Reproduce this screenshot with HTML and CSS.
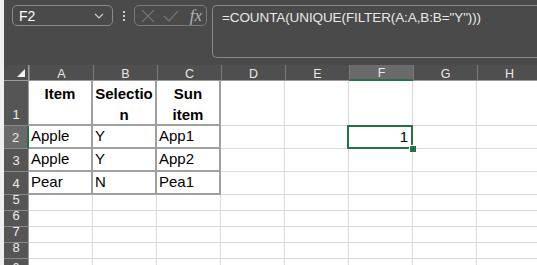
FILE: index.html
```html
<!DOCTYPE html>
<html>
<head>
<meta charset="utf-8">
<link rel="stylesheet" href="styles.css">
</head>
<body>
<div class="app">
  <div class="toolbar">
    <div class="namebox">
      <span class="name">F2</span>
      <svg class="chev" width="10" height="6" viewBox="0 0 10 6"><path d="M1 1 L5 5 L9 1" fill="none" stroke="#d0d0d0" stroke-width="1.2"/></svg>
    </div>
    <div class="dots"><span></span><span></span><span></span></div>
    <div class="fxbox">
      <svg width="14" height="14" viewBox="0 0 14 14"><path d="M1 1 L13 13 M13 1 L1 13" stroke="#7a7a7a" stroke-width="1.1" fill="none"/></svg>
      <svg width="16" height="12" viewBox="0 0 16 12"><path d="M1 6 L6 11 L15 1" stroke="#7a7a7a" stroke-width="1.1" fill="none"/></svg>
      <span class="fx">fx</span>
    </div>
    <div class="formula">=COUNTA(UNIQUE(FILTER(A:A,B:B="Y")))</div>
  </div>
  <div class="grid">
    <div class="corner"><span class="tri"></span></div>
    <div class="ch">A</div><div class="ch">B</div><div class="ch">C</div><div class="ch">D</div>
    <div class="ch">E</div><div class="ch ch-sel">F</div><div class="ch">G</div><div class="ch">H</div>

    <div class="rh">1</div>
    <div class="c t hd">Item</div><div class="c t hd">Selection</div><div class="c t hd">Sun item</div>
    <div class="c"></div><div class="c"></div><div class="c"></div><div class="c"></div><div class="c"></div>

    <div class="rh rh-sel">2</div>
    <div class="c t">Apple</div><div class="c t">Y</div><div class="c t">App1</div>
    <div class="c"></div><div class="c"></div><div class="c num sel">1</div><div class="c"></div><div class="c"></div>

    <div class="rh">3</div>
    <div class="c t">Apple</div><div class="c t">Y</div><div class="c t">App2</div>
    <div class="c"></div><div class="c"></div><div class="c"></div><div class="c"></div><div class="c"></div>

    <div class="rh">4</div>
    <div class="c t">Pear</div><div class="c t">N</div><div class="c t">Pea1</div>
    <div class="c"></div><div class="c"></div><div class="c"></div><div class="c"></div><div class="c"></div>

    <div class="rh">5</div>
    <div class="c"></div><div class="c"></div><div class="c"></div><div class="c"></div><div class="c"></div><div class="c"></div><div class="c"></div><div class="c"></div>
    <div class="rh">6</div>
    <div class="c"></div><div class="c"></div><div class="c"></div><div class="c"></div><div class="c"></div><div class="c"></div><div class="c"></div><div class="c"></div>
    <div class="rh">7</div>
    <div class="c"></div><div class="c"></div><div class="c"></div><div class="c"></div><div class="c"></div><div class="c"></div><div class="c"></div><div class="c"></div>
    <div class="rh">8</div>
    <div class="c"></div><div class="c"></div><div class="c"></div><div class="c"></div><div class="c"></div><div class="c"></div><div class="c"></div><div class="c"></div>
    <div class="rh rh-last">9</div>
    <div class="c"></div><div class="c"></div><div class="c"></div><div class="c"></div><div class="c"></div><div class="c"></div><div class="c"></div><div class="c"></div>
  </div>
</div>
</body>
</html>
```
FILE: styles.css
```css
* { box-sizing: border-box; }
html, body { margin: 0; padding: 0; }
body {
  width: 537px;
  height: 265px;
  overflow: hidden;
  background: #f0f0f0;
  font-family: "Liberation Sans", Arial, sans-serif;
}
.app {
  margin-left: 4px;
  height: 265px;
  background: #ffffff;
  overflow: hidden;
}
.toolbar {
  height: 65px;
  background: #4a4a4a;
  display: flex;
  align-items: flex-start;
  padding: 5px 0 0 8px;
}
.namebox {
  width: 101px;
  height: 21px;
  border: 1px solid #8a8a8a;
  border-radius: 5px;
  display: flex;
  align-items: center;
  justify-content: space-between;
  padding: 0 8px 0 6px;
  color: #ffffff;
  font-size: 14px;
}
.chev { margin-top: 1px; }
.dots {
  width: 21px;
  height: 21px;
  display: flex;
  flex-direction: column;
  align-items: center;
  justify-content: center;
  gap: 2px;
}
.dots span {
  width: 2px;
  height: 2px;
  background: #cfcfcf;
}
.fxbox {
  width: 73px;
  height: 21px;
  border: 1px solid #7a7a7a;
  border-radius: 5px;
  display: flex;
  align-items: center;
  gap: 8px;
  padding: 0 4px 0 6px;
}
.fx {
  font-family: "Liberation Serif", "DejaVu Serif", serif;
  font-style: italic;
  font-size: 17px;
  color: #b4b4b4;
  margin-left: 3px;
}
.formula {
  margin-left: 5px;
  flex: 1;
  height: 53px;
  border: 1px solid #8a8a8a;
  border-right: none;
  border-radius: 5px 0 0 5px;
  color: #e8e8e8;
  font-size: 13.5px;
  padding: 4px 0 0 9px;
  letter-spacing: -0.1px;
}
.grid {
  display: grid;
  grid-template-columns: 25px repeat(8, 64px);
  grid-template-rows: 16px 45px 23px 23px 23px 16px 16px 16px 16px 16px;
}
.corner {
  background: #4f4f4f;
  border-right: 1px solid #9a9a9a;
  border-bottom: 1px solid #9a9a9a;
  position: relative;
}
.tri {
  position: absolute;
  right: 3px;
  bottom: 3px;
  width: 0;
  height: 0;
  border-left: 8px solid transparent;
  border-bottom: 8px solid #f2f2f2;
}
.ch {
  background: #4f4f4f;
  color: #e8e8e8;
  font-size: 12.5px;
  display: flex;
  align-items: center;
  justify-content: center;
  border-left: 1px solid #7a7a7a;
  border-bottom: 1px solid #9a9a9a;
  padding-top: 2px;
}
.ch-sel {
  background: #6a6a6a;
  border-bottom: 2px solid #217346;
}
.rh {
  background: #555555;
  color: #ececec;
  font-size: 13px;
  display: flex;
  align-items: flex-end;
  justify-content: center;
  padding-bottom: 3px;
  border-bottom: 1px solid #8a8a8a;
  border-right: 1px solid #9a9a9a;
}
.rh-last {
  align-items: flex-start;
  padding: 2px 0 0 0;
  font-size: 12px;
}
.rh-sel {
  background: #6a6a6a;
  border-right: 2px solid #217346;
}
.c {
  border-right: 1px solid #dadada;
  border-bottom: 1px solid #dadada;
  font-size: 15px;
  color: #000;
  display: flex;
  align-items: flex-end;
  padding: 0 1px 2px 2px;
  line-height: 18px;
}
.c.t {
  border-right: 2px solid #a0a0a0;
  border-bottom: 2px solid #a0a0a0;
}
.hd {
  display: block;
  font-weight: bold;
  text-align: center;
  line-height: 21px;
  padding: 2px 1px 0 1px;
  overflow-wrap: anywhere;
}
.num {
  justify-content: flex-end;
  padding-right: 4px;
}
.sel { position: relative; }
.sel::before {
  content: "";
  position: absolute;
  left: -2px;
  top: -1px;
  right: -1px;
  bottom: -1px;
  border: 2px solid #217346;
}
.sel::after {
  content: "";
  position: absolute;
  right: -4px;
  bottom: -4px;
  width: 6px;
  height: 6px;
  background: #217346;
  border-left: 1px solid #fff;
  border-top: 1px solid #fff;
}
```
